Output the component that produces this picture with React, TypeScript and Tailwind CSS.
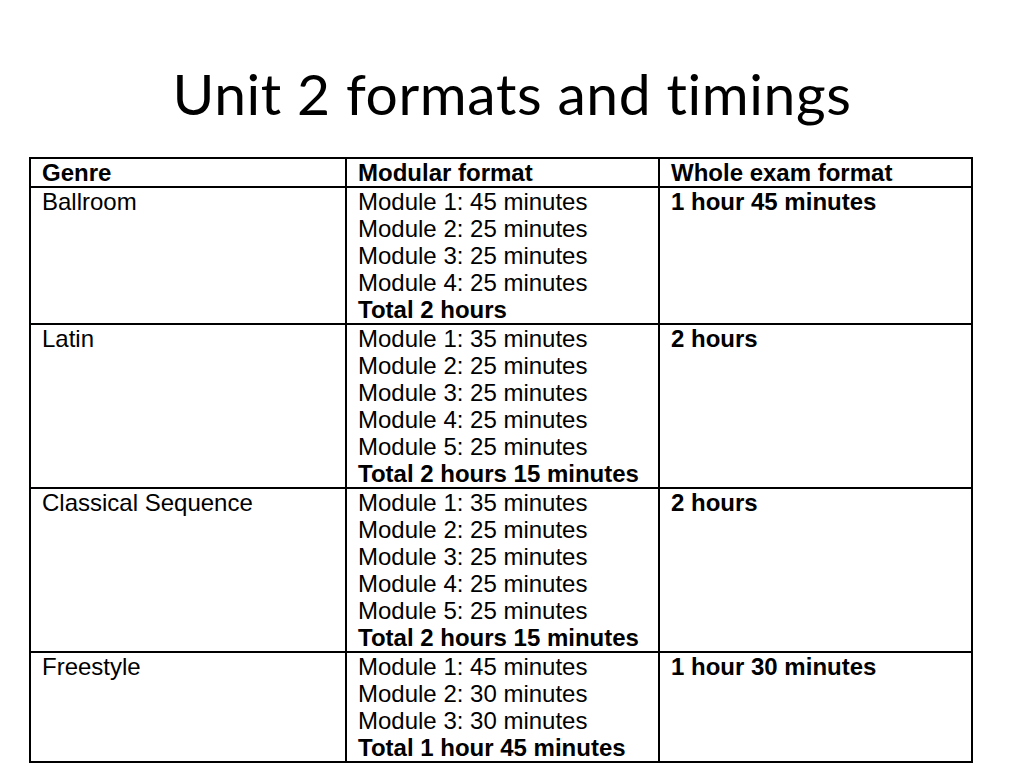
const ROWS = [
  {
    genre: 'Ballroom',
    modules: ['Module 1: 45 minutes', 'Module 2: 25 minutes', 'Module 3: 25 minutes', 'Module 4: 25 minutes'],
    total: 'Total 2 hours',
    whole: '1 hour 45 minutes',
  },
  {
    genre: 'Latin',
    modules: [
      'Module 1: 35 minutes',
      'Module 2: 25 minutes',
      'Module 3: 25 minutes',
      'Module 4: 25 minutes',
      'Module 5: 25 minutes',
    ],
    total: 'Total 2 hours 15 minutes',
    whole: '2 hours',
  },
  {
    genre: 'Classical Sequence',
    modules: [
      'Module 1: 35 minutes',
      'Module 2: 25 minutes',
      'Module 3: 25 minutes',
      'Module 4: 25 minutes',
      'Module 5: 25 minutes',
    ],
    total: 'Total 2 hours 15 minutes',
    whole: '2 hours',
  },
  {
    genre: 'Freestyle',
    modules: ['Module 1: 45 minutes', 'Module 2: 30 minutes', 'Module 3: 30 minutes'],
    total: 'Total 1 hour 45 minutes',
    whole: '1 hour 30 minutes',
  },
];

const cell = 'border-2 border-black align-top px-[11px] py-0';

export default function App() {
  return (
    <div className="w-[1024px] h-[768px] bg-white text-black overflow-hidden">
      <h1 className="pt-[59px] pb-[1px] text-center font-['Lato',sans-serif] text-[57px] leading-[68px] font-normal tracking-[0.6px] [font-variant-ligatures:none]">
        Unit 2 formats and timings
      </h1>
      <table className="ml-[29px] mt-[29px] w-[944px] table-fixed border-collapse font-['Liberation_Sans',Arial,sans-serif] text-[24px] leading-[27px]">
        <colgroup>
          <col className="w-[316px]" />
          <col className="w-[313px]" />
          <col />
        </colgroup>
        <thead>
          <tr>
            <th className={`${cell} text-left font-bold`}>Genre</th>
            <th className={`${cell} text-left font-bold`}>Modular format</th>
            <th className={`${cell} text-left font-bold`}>Whole exam format</th>
          </tr>
        </thead>
        <tbody>
          {ROWS.map((row) => (
            <tr key={row.genre}>
              <td className={cell}>{row.genre}</td>
              <td className={cell}>
                {row.modules.map((m) => (
                  <div key={m}>{m}</div>
                ))}
                <div className="font-bold">{row.total}</div>
              </td>
              <td className={`${cell} font-bold`}>{row.whole}</td>
            </tr>
          ))}
        </tbody>
      </table>
    </div>
  );
}
